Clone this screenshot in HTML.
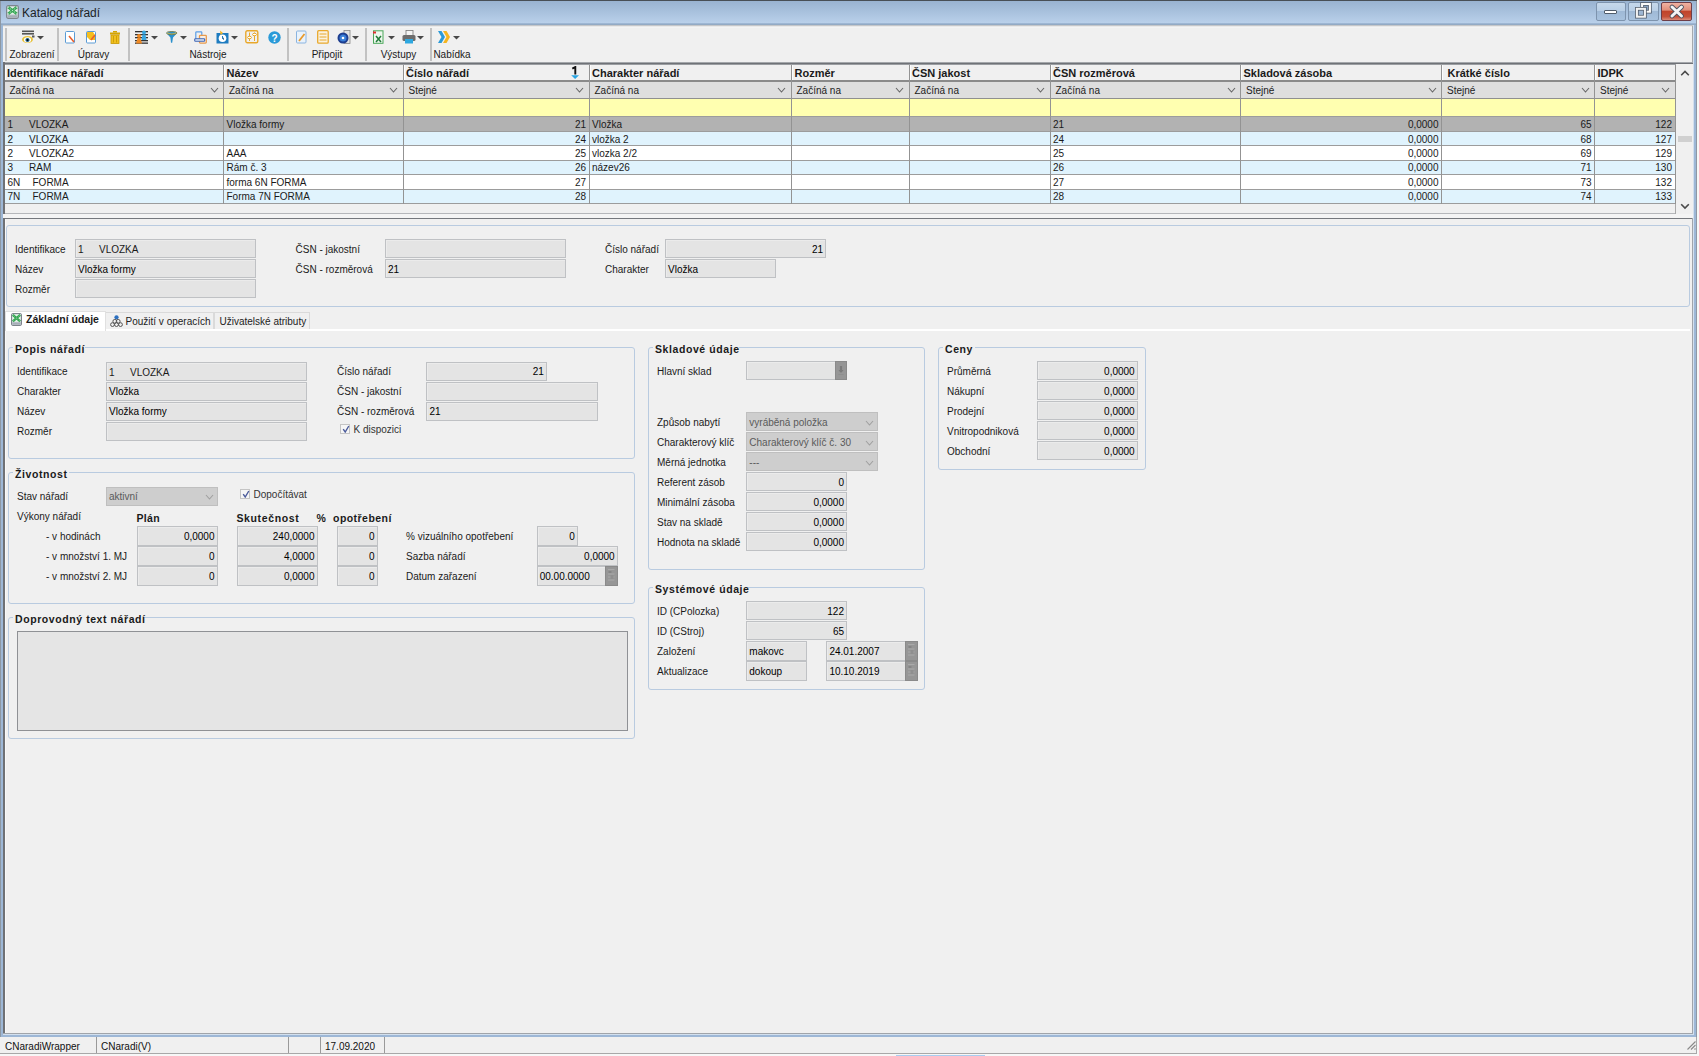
<!DOCTYPE html><html><head><meta charset="utf-8"><title>Katalog nářadí</title><style>
html,body{margin:0;padding:0}
body{width:1699px;height:1056px;overflow:hidden;position:relative;background:#f7f7f7;font-family:"Liberation Sans",sans-serif;color:#000}
div,span,svg{position:absolute;margin:0;padding:0}
span{white-space:nowrap}
</style></head><body>
<div style="left:0px;top:0px;width:1697px;height:1037px;background:#9db7d6"></div>
<div style="left:0px;top:0px;width:1px;height:1037px;background:#8e98a3"></div>
<div style="left:1696px;top:0px;width:1px;height:1037px;background:#8e98a3"></div>
<div style="left:0px;top:0px;width:1697px;height:1px;background:#484f56"></div>
<div style="left:1px;top:1px;width:1695px;height:22px;background:linear-gradient(#99b3d1,#b9d0ea)"></div>
<div style="left:1px;top:22.5px;width:1695px;height:1px;background:#9db6d3"></div>
<div style="left:1px;top:23.5px;width:1695px;height:1.5px;background:#93aac4"></div>
<svg style="left:6px;top:5px" width="13" height="14" viewBox="0 0 13 14"><rect x="0.6" y="0.6" width="11.8" height="12.8" rx="1.6" fill="#c3cad2" stroke="#7d848c" stroke-width="1.1"/><rect x="1.6" y="1.6" width="9.8" height="7.8" fill="#e8f3ea"/><path d="M2.2 2.2 L10.8 8.8 M10.8 2.2 L2.2 8.8" stroke="#3aa857" stroke-width="2.8"/><path d="M2.2 2.2 L10.8 8.8 M10.8 2.2 L2.2 8.8" stroke="#d6f0dc" stroke-width="0.8" stroke-dasharray="1.2 1.3"/><rect x="1.8" y="10.3" width="9.4" height="2.2" fill="#a6aeb7"/></svg>
<span style="left:22px;top:7.24px;font-size:12px;line-height:12px;color:#1b1f26;">Katalog nářadí</span>
<div style="left:1596px;top:2px;width:30px;height:18.5px;box-sizing:border-box;border:1px solid #7d93ad;border-radius:2px;background:linear-gradient(#c6d8ea 0%,#b9cfe6 45%,#9fb9d6 50%,#a8c2de 100%)"></div>
<div style="left:1604px;top:10px;width:13px;height:4px;background:#fff;border:1px solid #505c6a;border-radius:1px;box-sizing:border-box"></div>
<div style="left:1628px;top:2px;width:31px;height:18.5px;box-sizing:border-box;border:1px solid #7d93ad;border-radius:2px;background:linear-gradient(#c6d8ea 0%,#b9cfe6 45%,#9fb9d6 50%,#a8c2de 100%)"></div>
<svg style="left:1634px;top:2px" width="20" height="18"><rect x="8.1" y="2" width="7.8" height="7.7" fill="#8aa3c0" stroke="#4e5866" stroke-width="3.6"/><rect x="8.1" y="2" width="7.8" height="7.7" fill="none" stroke="#fafafa" stroke-width="2.1"/><rect x="2.9" y="6.8" width="8" height="7.9" fill="#9db6d3" stroke="#4e5866" stroke-width="3.6"/><rect x="2.9" y="6.8" width="8" height="7.9" fill="none" stroke="#f2f2f2" stroke-width="2.1"/></svg>
<div style="left:1661px;top:2px;width:31px;height:18.5px;box-sizing:border-box;border:1px solid #6e3e48;border-radius:2px;background:linear-gradient(#f0b2a2 0%,#e08e7a 42%,#c0432a 48%,#c55038 80%,#d98a78 100%)"></div>
<svg style="left:1668px;top:3.5px" width="18" height="15"><path d="M4 3 L13.5 12 M13.5 3 L4 12" stroke="#4a4f5c" stroke-width="4.6" stroke-linecap="round"/><path d="M4 3 L13.5 12 M13.5 3 L4 12" stroke="#f4f4f4" stroke-width="3" stroke-linecap="round"/></svg>
<div style="left:3px;top:25px;width:1690px;height:1009px;background:#f0f0f0"></div>
<div style="left:3px;top:25px;width:1690px;height:1px;background:#c4c6c9"></div>
<div style="left:3px;top:26px;width:1690px;height:1px;background:#e9e9e9"></div>
<div style="left:3px;top:27px;width:1690px;height:1px;background:#f4f4f4"></div>
<div style="left:5px;top:28.2px;width:2px;height:32.4px;background:#c2c2c2"></div>
<div style="left:57px;top:28.2px;width:2px;height:32.4px;background:#c2c2c2"></div>
<div style="left:127.5px;top:28.2px;width:2px;height:32.4px;background:#c2c2c2"></div>
<div style="left:286.5px;top:28.2px;width:2px;height:32.4px;background:#c2c2c2"></div>
<div style="left:365px;top:28.2px;width:2px;height:32.4px;background:#c2c2c2"></div>
<div style="left:429.5px;top:28.2px;width:2px;height:32.4px;background:#c2c2c2"></div>
<span style="left:-168px;width:400px;text-align:center;top:50.03px;font-size:10px;line-height:10px;color:#1a1a1a;">Zobrazení</span>
<span style="left:-106.5px;width:400px;text-align:center;top:50.03px;font-size:10px;line-height:10px;color:#1a1a1a;">Úpravy</span>
<span style="left:8px;width:400px;text-align:center;top:50.03px;font-size:10px;line-height:10px;color:#1a1a1a;">Nástroje</span>
<span style="left:127px;width:400px;text-align:center;top:50.03px;font-size:10px;line-height:10px;color:#1a1a1a;">Připojit</span>
<span style="left:198.5px;width:400px;text-align:center;top:50.03px;font-size:10px;line-height:10px;color:#1a1a1a;">Výstupy</span>
<span style="left:252px;width:400px;text-align:center;top:50.03px;font-size:10px;line-height:10px;color:#1a1a1a;">Nabídka</span>
<svg style="left:22px;top:30px" width="13" height="14"><rect x="0" y="0.5" width="12" height="1.6" fill="#555"/><rect x="0" y="3" width="12" height="1.6" fill="#555"/><ellipse cx="5.5" cy="9.5" rx="5.5" ry="3.5" fill="#e8c23a"/><ellipse cx="5.5" cy="9.8" rx="3.6" ry="2.6" fill="#fff"/><circle cx="5.5" cy="10" r="2.1" fill="#1f5f8a"/><circle cx="5.5" cy="10" r="0.9" fill="#000"/><rect x="10" y="5.5" width="2.5" height="2" fill="#555"/></svg>
<svg style="left:36.7px;top:35.7px" width="7" height="4"><path d="M0 0 L7 0 L3.5 3.6 Z" fill="#484848"/></svg>
<svg style="left:65px;top:31px" width="11" height="13"><rect x="0.5" y="0.5" width="9" height="11.5" rx="1" fill="#fff" stroke="#5a9bd5"/><path d="M4 5 L9 11" stroke="#e8602c" stroke-width="1.6"/></svg>
<svg style="left:86px;top:31px" width="11" height="13"><rect x="0.5" y="0.5" width="9" height="11.5" rx="1" fill="#fff" stroke="#5a9bd5"/><path d="M1 1 H7 L9 4 V9 H4 L1 6 Z" fill="#f5be1d"/><path d="M5 9 L9 4" stroke="#e8602c" stroke-width="1.6"/></svg>
<svg style="left:110px;top:31px" width="10" height="13"><rect x="3" y="0" width="4" height="1.5" fill="#d4a400"/><rect x="0" y="1.5" width="10" height="2" fill="#d4a400"/><rect x="1" y="4" width="8" height="8.5" fill="#f0c020" stroke="#c89600" stroke-width="0.8"/><path d="M3.5 5 V11.5 M6.5 5 V11.5" stroke="#c89600" stroke-width="0.8"/></svg>
<svg style="left:135px;top:30px" width="14" height="14"><g fill="#333"><rect x="0" y="1" width="13" height="1.3"/><rect x="0" y="4" width="13" height="1.3"/><rect x="0" y="7" width="13" height="1.3"/><rect x="0" y="10" width="13" height="1.3"/><rect x="0" y="12.5" width="13" height="1.3"/></g><circle cx="4" cy="6" r="2" fill="#f08a24"/><path d="M1 13.5 L2.5 8 H5.5 L7 13.5Z" fill="#f08a24"/><circle cx="9" cy="2.5" r="2" fill="#38a6e0"/><path d="M6.5 10 L7.5 4.5 H10.5 L11.5 10Z" fill="#38a6e0"/></svg>
<svg style="left:150.7px;top:35.7px" width="7" height="4"><path d="M0 0 L7 0 L3.5 3.6 Z" fill="#484848"/></svg>
<svg style="left:166px;top:31px" width="12" height="12"><path d="M0.3 2 Q5.75 -1 11.2 2 L7 6.5 L6.2 11.8 L5 11.8 L4.4 6.5 Z" fill="#2a90cc"/><ellipse cx="5.75" cy="2" rx="5.3" ry="1.5" fill="none" stroke="#6f7a4a" stroke-width="0.9"/><path d="M1 2.2 Q5.75 3.6 10.5 2.2" stroke="#d4b84a" stroke-width="0.8" fill="none"/></svg>
<svg style="left:180.2px;top:35.7px" width="7" height="4"><path d="M0 0 L7 0 L3.5 3.6 Z" fill="#484848"/></svg>
<svg style="left:194px;top:31px" width="13" height="13"><rect x="1.8" y="0.8" width="6" height="8" rx="0.8" fill="none" stroke="#5b9ee6" stroke-width="1.2"/><rect x="5.5" y="4.3" width="6.8" height="7.8" rx="0.8" fill="#f6efe6" stroke="#e89a4c" stroke-width="1.3"/><rect x="0.7" y="7.8" width="10" height="2.4" rx="0.8" fill="#dfe8f4" stroke="#3e64b4" stroke-width="1.1"/></svg>
<svg style="left:216px;top:30px" width="13" height="14"><rect x="0.5" y="3" width="12" height="10.5" fill="#1e7cc0"/><circle cx="6.5" cy="8.3" r="3.8" fill="#fff"/><path d="M6.5 6 V8.5 L8 9.5" stroke="#1e7cc0" stroke-width="1"/><path d="M4 0.5 L7 3 L4.5 5" fill="#f5b520"/></svg>
<svg style="left:231.2px;top:35.7px" width="7" height="4"><path d="M0 0 L7 0 L3.5 3.6 Z" fill="#484848"/></svg>
<svg style="left:245px;top:30px" width="14" height="14"><rect x="0.8" y="0.8" width="12" height="12" rx="1.5" fill="none" stroke="#e8a82c" stroke-width="1.4"/><path d="M4.5 2.5 V11 M9.5 2.5 V11" stroke="#e8a82c" stroke-width="1"/><ellipse cx="4.5" cy="7.5" rx="2" ry="1.2" fill="#fff" stroke="#e8a82c"/><ellipse cx="9.5" cy="4.5" rx="2" ry="1.2" fill="#fff" stroke="#e8a82c"/></svg>
<svg style="left:267.5px;top:31px" width="13" height="13"><circle cx="6.5" cy="6.5" r="6.2" fill="#2a9ad8"/><text x="6.5" y="10.5" text-anchor="middle" font-family="Liberation Sans" font-weight="bold" font-size="10" fill="#fff">?</text></svg>
<svg style="left:296px;top:30px" width="11" height="14"><rect x="0.5" y="1" width="9.5" height="12" rx="1" fill="#e9f2fb" stroke="#8ab4e0"/><path d="M3 11 L8.5 4" stroke="#e89a2c" stroke-width="1.8"/></svg>
<svg style="left:317px;top:30px" width="12" height="14"><rect x="0.7" y="0.7" width="10.5" height="12.5" rx="1" fill="#fbf2df" stroke="#e8a82c" stroke-width="1.3"/><path d="M2.5 4 H9.5 M2.5 7 H9.5 M2.5 10 H9.5" stroke="#e8a82c" stroke-width="1"/></svg>
<svg style="left:337px;top:30px" width="14" height="14"><rect x="7" y="0.5" width="6" height="13" fill="#e3e3e3" stroke="#888" stroke-width="0.8"/><circle cx="6" cy="8" r="5.5" fill="#1d3d8f"/><circle cx="6" cy="8" r="3.5" fill="#3a7fd8"/><circle cx="6" cy="8" r="1.3" fill="#fff"/></svg>
<svg style="left:351.7px;top:35.7px" width="7" height="4"><path d="M0 0 L7 0 L3.5 3.6 Z" fill="#484848"/></svg>
<svg style="left:373px;top:30px" width="11" height="14"><rect x="0.5" y="0.8" width="9.5" height="12.5" fill="#eef7ee" stroke="#4aa85a"/><path d="M3 6 L8 12 M8 6 L3 12" stroke="#1f7a38" stroke-width="1.5"/><rect x="0" y="1.5" width="3" height="2" fill="#e03030"/></svg>
<svg style="left:387.7px;top:35.7px" width="7" height="4"><path d="M0 0 L7 0 L3.5 3.6 Z" fill="#484848"/></svg>
<svg style="left:402px;top:30px" width="14" height="14"><rect x="4" y="0.5" width="7" height="5" fill="#f4f4f4" stroke="#777" stroke-width="0.8"/><rect x="0.5" y="5" width="13" height="6" rx="1.5" fill="#6d6d6d"/><rect x="3" y="9" width="8" height="4.5" fill="#2ea8e0"/></svg>
<svg style="left:417.2px;top:35.7px" width="7" height="4"><path d="M0 0 L7 0 L3.5 3.6 Z" fill="#484848"/></svg>
<svg style="left:438px;top:31px" width="13" height="12"><path d="M0 0 H3.5 L7 6 L3.5 12 H0 L3.5 6Z" fill="#2a9ad8"/><path d="M5 0 H8.5 L12 6 L8.5 12 H5 L8.5 6Z" fill="#f5b520"/></svg>
<svg style="left:453.2px;top:35.7px" width="7" height="4"><path d="M0 0 L7 0 L3.5 3.6 Z" fill="#484848"/></svg>
<div style="left:4px;top:63px;width:1689px;height:151px;background:#f0f0f0"></div>
<div style="left:3px;top:62px;width:1690px;height:1px;background:#a4a7ab"></div>
<div style="left:3px;top:63px;width:1690px;height:1px;background:#6f7277"></div>
<div style="left:3px;top:64px;width:1690px;height:1px;background:#9a9da1"></div>
<div style="left:4px;top:65px;width:1671px;height:15.5px;background:#f0f0f0"></div>
<div style="left:4px;top:81.5px;width:1671px;height:16px;background:#dedede"></div>
<div style="left:4px;top:99px;width:1671px;height:17.2px;background:#ffffb0"></div>
<div style="left:4px;top:117.2px;width:1671px;height:14.499999999999986px;background:#b2b2b2"></div>
<div style="left:4px;top:131.7px;width:1671px;height:14.5px;background:#e0f3fd"></div>
<div style="left:4px;top:146.2px;width:1671px;height:14.400000000000006px;background:#ffffff"></div>
<div style="left:4px;top:160.6px;width:1671px;height:14.5px;background:#e0f3fd"></div>
<div style="left:4px;top:175.1px;width:1671px;height:14.5px;background:#ffffff"></div>
<div style="left:4px;top:189.6px;width:1671px;height:14.400000000000006px;background:#e0f3fd"></div>
<div style="left:4px;top:80px;width:1671px;height:1.5px;background:#8a8a8a"></div>
<div style="left:4px;top:97.5px;width:1671px;height:1.5px;background:#8f8f8f"></div>
<div style="left:4px;top:116px;width:1671px;height:1px;background:#9c9c9c"></div>
<div style="left:4px;top:131px;width:1671px;height:1px;background:#9c9c9c"></div>
<div style="left:4px;top:145px;width:1671px;height:1px;background:#9c9c9c"></div>
<div style="left:4px;top:160px;width:1671px;height:1px;background:#9c9c9c"></div>
<div style="left:4px;top:174px;width:1671px;height:1px;background:#9c9c9c"></div>
<div style="left:4px;top:189px;width:1671px;height:1px;background:#9c9c9c"></div>
<div style="left:4px;top:203px;width:1671px;height:1px;background:#9c9c9c"></div>
<div style="left:4px;top:213px;width:1671px;height:1px;background:#b5b7ba"></div>
<div style="left:223px;top:65px;width:1px;height:138.5px;background:#939393"></div>
<div style="left:403px;top:65px;width:1px;height:138.5px;background:#939393"></div>
<div style="left:589px;top:65px;width:1px;height:138.5px;background:#939393"></div>
<div style="left:791px;top:65px;width:1px;height:138.5px;background:#939393"></div>
<div style="left:909px;top:65px;width:1px;height:138.5px;background:#939393"></div>
<div style="left:1050px;top:65px;width:1px;height:138.5px;background:#939393"></div>
<div style="left:1240px;top:65px;width:1px;height:138.5px;background:#939393"></div>
<div style="left:1441px;top:65px;width:1px;height:138.5px;background:#939393"></div>
<div style="left:1594px;top:65px;width:1px;height:138.5px;background:#939393"></div>
<div style="left:1675px;top:65px;width:1px;height:138.5px;background:#939393"></div>
<div style="left:1674.5px;top:203.5px;width:1px;height:10px;background:#a9a9a9"></div>
<div style="left:4.7px;top:65px;width:1px;height:15px;background:#fdfdfd"></div>
<div style="left:224.2px;top:65px;width:1px;height:15px;background:#fdfdfd"></div>
<div style="left:403.7px;top:65px;width:1px;height:15px;background:#fdfdfd"></div>
<div style="left:589.7px;top:65px;width:1px;height:15px;background:#fdfdfd"></div>
<div style="left:791.7px;top:65px;width:1px;height:15px;background:#fdfdfd"></div>
<div style="left:909.7px;top:65px;width:1px;height:15px;background:#fdfdfd"></div>
<div style="left:1050.7px;top:65px;width:1px;height:15px;background:#fdfdfd"></div>
<div style="left:1241.2px;top:65px;width:1px;height:15px;background:#fdfdfd"></div>
<div style="left:1442.2px;top:65px;width:1px;height:15px;background:#fdfdfd"></div>
<div style="left:1595.2px;top:65px;width:1px;height:15px;background:#fdfdfd"></div>
<span style="left:7px;top:68.29px;font-size:11px;line-height:11px;font-weight:bold;color:#1a1a1a;">Identifikace nářadí</span>
<span style="left:9.5px;top:86.03px;font-size:10px;line-height:10px;color:#222;">Začíná na</span>
<svg style="left:209.5px;top:87px" width="9" height="6"><path d="M1 1 L4.5 5 L8 1" fill="none" stroke="#666" stroke-width="1.1"/></svg>
<span style="left:226.5px;top:68.29px;font-size:11px;line-height:11px;font-weight:bold;color:#1a1a1a;">Název</span>
<span style="left:229.0px;top:86.03px;font-size:10px;line-height:10px;color:#222;">Začíná na</span>
<svg style="left:389px;top:87px" width="9" height="6"><path d="M1 1 L4.5 5 L8 1" fill="none" stroke="#666" stroke-width="1.1"/></svg>
<span style="left:406px;top:68.29px;font-size:11px;line-height:11px;font-weight:bold;color:#1a1a1a;">Číslo nářadí</span>
<span style="left:408.5px;top:86.03px;font-size:10px;line-height:10px;color:#222;">Stejné</span>
<svg style="left:575px;top:87px" width="9" height="6"><path d="M1 1 L4.5 5 L8 1" fill="none" stroke="#666" stroke-width="1.1"/></svg>
<span style="left:592px;top:68.29px;font-size:11px;line-height:11px;font-weight:bold;color:#1a1a1a;">Charakter nářadí</span>
<span style="left:594.5px;top:86.03px;font-size:10px;line-height:10px;color:#222;">Začíná na</span>
<svg style="left:777px;top:87px" width="9" height="6"><path d="M1 1 L4.5 5 L8 1" fill="none" stroke="#666" stroke-width="1.1"/></svg>
<span style="left:794.5px;top:68.29px;font-size:11px;line-height:11px;font-weight:bold;color:#1a1a1a;">Rozměr</span>
<span style="left:796.5px;top:86.03px;font-size:10px;line-height:10px;color:#222;">Začíná na</span>
<svg style="left:895px;top:87px" width="9" height="6"><path d="M1 1 L4.5 5 L8 1" fill="none" stroke="#666" stroke-width="1.1"/></svg>
<span style="left:912px;top:68.29px;font-size:11px;line-height:11px;font-weight:bold;color:#1a1a1a;">ČSN jakost</span>
<span style="left:914.5px;top:86.03px;font-size:10px;line-height:10px;color:#222;">Začíná na</span>
<svg style="left:1036px;top:87px" width="9" height="6"><path d="M1 1 L4.5 5 L8 1" fill="none" stroke="#666" stroke-width="1.1"/></svg>
<span style="left:1053px;top:68.29px;font-size:11px;line-height:11px;font-weight:bold;color:#1a1a1a;">ČSN rozměrová</span>
<span style="left:1055.5px;top:86.03px;font-size:10px;line-height:10px;color:#222;">Začíná na</span>
<svg style="left:1226.5px;top:87px" width="9" height="6"><path d="M1 1 L4.5 5 L8 1" fill="none" stroke="#666" stroke-width="1.1"/></svg>
<span style="left:1243.5px;top:68.29px;font-size:11px;line-height:11px;font-weight:bold;color:#1a1a1a;">Skladová zásoba</span>
<span style="left:1246.0px;top:86.03px;font-size:10px;line-height:10px;color:#222;">Stejné</span>
<svg style="left:1427.5px;top:87px" width="9" height="6"><path d="M1 1 L4.5 5 L8 1" fill="none" stroke="#666" stroke-width="1.1"/></svg>
<span style="left:1447.5px;top:68.29px;font-size:11px;line-height:11px;font-weight:bold;color:#1a1a1a;">Krátké číslo</span>
<span style="left:1447.0px;top:86.03px;font-size:10px;line-height:10px;color:#222;">Stejné</span>
<svg style="left:1580.5px;top:87px" width="9" height="6"><path d="M1 1 L4.5 5 L8 1" fill="none" stroke="#666" stroke-width="1.1"/></svg>
<span style="left:1597.5px;top:68.29px;font-size:11px;line-height:11px;font-weight:bold;color:#1a1a1a;">IDPK</span>
<span style="left:1600.0px;top:86.03px;font-size:10px;line-height:10px;color:#222;">Stejné</span>
<svg style="left:1661px;top:87px" width="9" height="6"><path d="M1 1 L4.5 5 L8 1" fill="none" stroke="#666" stroke-width="1.1"/></svg>
<svg style="left:570px;top:66px" width="10" height="14"><path d="M2.3 2.6 L5.3 1 V8.6" fill="none" stroke="#111" stroke-width="1.9"/><path d="M1.2 9.2 H9 L5.1 13 Z" fill="#2aa6e4"/></svg>
<span style="left:7.5px;top:120.08px;font-size:10px;line-height:10px;color:#1a1a1a;">1</span>
<span style="left:29px;top:120.08px;font-size:10px;line-height:10px;color:#1a1a1a;">VLOZKA</span>
<span style="left:226.5px;top:120.08px;font-size:10px;line-height:10px;color:#1a1a1a;">Vložka formy</span>
<span style="left:186px;width:400px;text-align:right;top:120.08px;font-size:10px;line-height:10px;color:#1a1a1a;">21</span>
<span style="left:592px;top:120.08px;font-size:10px;line-height:10px;color:#1a1a1a;">Vložka</span>
<span style="left:1053px;top:120.08px;font-size:10px;line-height:10px;color:#1a1a1a;">21</span>
<span style="left:1038.5px;width:400px;text-align:right;top:120.08px;font-size:10px;line-height:10px;color:#1a1a1a;">0,0000</span>
<span style="left:1191.5px;width:400px;text-align:right;top:120.08px;font-size:10px;line-height:10px;color:#1a1a1a;">65</span>
<span style="left:1272px;width:400px;text-align:right;top:120.08px;font-size:10px;line-height:10px;color:#1a1a1a;">122</span>
<span style="left:7.5px;top:134.58px;font-size:10px;line-height:10px;color:#1a1a1a;">2</span>
<span style="left:29px;top:134.58px;font-size:10px;line-height:10px;color:#1a1a1a;">VLOZKA</span>
<span style="left:186px;width:400px;text-align:right;top:134.58px;font-size:10px;line-height:10px;color:#1a1a1a;">24</span>
<span style="left:592px;top:134.58px;font-size:10px;line-height:10px;color:#1a1a1a;">vložka 2</span>
<span style="left:1053px;top:134.58px;font-size:10px;line-height:10px;color:#1a1a1a;">24</span>
<span style="left:1038.5px;width:400px;text-align:right;top:134.58px;font-size:10px;line-height:10px;color:#1a1a1a;">0,0000</span>
<span style="left:1191.5px;width:400px;text-align:right;top:134.58px;font-size:10px;line-height:10px;color:#1a1a1a;">68</span>
<span style="left:1272px;width:400px;text-align:right;top:134.58px;font-size:10px;line-height:10px;color:#1a1a1a;">127</span>
<span style="left:7.5px;top:149.03px;font-size:10px;line-height:10px;color:#1a1a1a;">2</span>
<span style="left:29px;top:149.03px;font-size:10px;line-height:10px;color:#1a1a1a;">VLOZKA2</span>
<span style="left:226.5px;top:149.03px;font-size:10px;line-height:10px;color:#1a1a1a;">AAA</span>
<span style="left:186px;width:400px;text-align:right;top:149.03px;font-size:10px;line-height:10px;color:#1a1a1a;">25</span>
<span style="left:592px;top:149.03px;font-size:10px;line-height:10px;color:#1a1a1a;">vlozka 2/2</span>
<span style="left:1053px;top:149.03px;font-size:10px;line-height:10px;color:#1a1a1a;">25</span>
<span style="left:1038.5px;width:400px;text-align:right;top:149.03px;font-size:10px;line-height:10px;color:#1a1a1a;">0,0000</span>
<span style="left:1191.5px;width:400px;text-align:right;top:149.03px;font-size:10px;line-height:10px;color:#1a1a1a;">69</span>
<span style="left:1272px;width:400px;text-align:right;top:149.03px;font-size:10px;line-height:10px;color:#1a1a1a;">129</span>
<span style="left:7.5px;top:163.48px;font-size:10px;line-height:10px;color:#1a1a1a;">3</span>
<span style="left:29px;top:163.48px;font-size:10px;line-height:10px;color:#1a1a1a;">RAM</span>
<span style="left:226.5px;top:163.48px;font-size:10px;line-height:10px;color:#1a1a1a;">Rám č. 3</span>
<span style="left:186px;width:400px;text-align:right;top:163.48px;font-size:10px;line-height:10px;color:#1a1a1a;">26</span>
<span style="left:592px;top:163.48px;font-size:10px;line-height:10px;color:#1a1a1a;">název26</span>
<span style="left:1053px;top:163.48px;font-size:10px;line-height:10px;color:#1a1a1a;">26</span>
<span style="left:1038.5px;width:400px;text-align:right;top:163.48px;font-size:10px;line-height:10px;color:#1a1a1a;">0,0000</span>
<span style="left:1191.5px;width:400px;text-align:right;top:163.48px;font-size:10px;line-height:10px;color:#1a1a1a;">71</span>
<span style="left:1272px;width:400px;text-align:right;top:163.48px;font-size:10px;line-height:10px;color:#1a1a1a;">130</span>
<span style="left:7.5px;top:177.98px;font-size:10px;line-height:10px;color:#1a1a1a;">6N</span>
<span style="left:32.5px;top:177.98px;font-size:10px;line-height:10px;color:#1a1a1a;">FORMA</span>
<span style="left:226.5px;top:177.98px;font-size:10px;line-height:10px;color:#1a1a1a;">forma 6N FORMA</span>
<span style="left:186px;width:400px;text-align:right;top:177.98px;font-size:10px;line-height:10px;color:#1a1a1a;">27</span>
<span style="left:1053px;top:177.98px;font-size:10px;line-height:10px;color:#1a1a1a;">27</span>
<span style="left:1038.5px;width:400px;text-align:right;top:177.98px;font-size:10px;line-height:10px;color:#1a1a1a;">0,0000</span>
<span style="left:1191.5px;width:400px;text-align:right;top:177.98px;font-size:10px;line-height:10px;color:#1a1a1a;">73</span>
<span style="left:1272px;width:400px;text-align:right;top:177.98px;font-size:10px;line-height:10px;color:#1a1a1a;">132</span>
<span style="left:7.5px;top:192.44px;font-size:10px;line-height:10px;color:#1a1a1a;">7N</span>
<span style="left:32.5px;top:192.44px;font-size:10px;line-height:10px;color:#1a1a1a;">FORMA</span>
<span style="left:226.5px;top:192.44px;font-size:10px;line-height:10px;color:#1a1a1a;">Forma 7N FORMA</span>
<span style="left:186px;width:400px;text-align:right;top:192.44px;font-size:10px;line-height:10px;color:#1a1a1a;">28</span>
<span style="left:1053px;top:192.44px;font-size:10px;line-height:10px;color:#1a1a1a;">28</span>
<span style="left:1038.5px;width:400px;text-align:right;top:192.44px;font-size:10px;line-height:10px;color:#1a1a1a;">0,0000</span>
<span style="left:1191.5px;width:400px;text-align:right;top:192.44px;font-size:10px;line-height:10px;color:#1a1a1a;">74</span>
<span style="left:1272px;width:400px;text-align:right;top:192.44px;font-size:10px;line-height:10px;color:#1a1a1a;">133</span>
<div style="left:1675.5px;top:64px;width:17.5px;height:150px;background:#f0f0f0"></div>
<svg style="left:1680px;top:203px" width="10" height="7"><path d="M1.2 1.2 L5 5 L8.8 1.2" fill="none" stroke="#4a4a4a" stroke-width="1.6"/></svg>
<svg style="left:1680px;top:70px" width="10" height="7"><path d="M1.2 5.3 L5 1.5 L8.8 5.3" fill="none" stroke="#4a4a4a" stroke-width="1.6"/></svg>
<div style="left:1677.5px;top:136px;width:14.5px;height:6px;background:#d0d0d0"></div>
<div style="left:3px;top:214px;width:1690px;height:4px;background:#f4f4f4"></div>
<div style="left:3px;top:218px;width:1690px;height:1px;background:#75787d"></div>
<div style="left:3px;top:62px;width:1.6px;height:152px;background:#6f7175"></div>
<div style="left:3px;top:218px;width:1.6px;height:816px;background:#6f7175"></div>
<div style="left:1692px;top:218px;width:1px;height:816px;background:#a0a4aa"></div>
<div style="left:1692px;top:26px;width:1px;height:36px;background:#a6a9ad"></div>
<div style="left:1693px;top:25px;width:1px;height:1009px;background:#d3e0ee"></div>
<div style="left:5px;top:219px;width:1.2px;height:814px;background:#f9f9f9"></div>
<div style="left:3px;top:1033px;width:1690px;height:1px;background:#a0a4aa"></div>
<div style="left:3px;top:1034px;width:1691px;height:0.8px;background:#d3e0ee"></div>
<div style="left:6px;top:225px;width:1684px;height:82px;box-sizing:border-box;border:1px solid #b9cbe0;border-radius:3px"></div>
<span style="left:15px;top:245.03px;font-size:10px;line-height:10px;color:#1a1a1a;">Identifikace</span>
<span style="left:15px;top:265.04px;font-size:10px;line-height:10px;color:#1a1a1a;">Název</span>
<span style="left:15px;top:285.04px;font-size:10px;line-height:10px;color:#1a1a1a;">Rozměr</span>
<div style="left:75px;top:239px;width:181px;height:19px;box-sizing:border-box;border:1px solid #bfc1c4;background:#e4e4e4;box-shadow:inset 1px 1px 0 #ebebeb"></div>
<span style="left:78px;top:244.84px;font-size:10px;line-height:10px;color:#1a1a1a;">1</span>
<span style="left:99px;top:244.84px;font-size:10px;line-height:10px;color:#1a1a1a;">VLOZKA</span>
<div style="left:75px;top:259px;width:181px;height:19px;box-sizing:border-box;border:1px solid #bfc1c4;background:#e4e4e4;box-shadow:inset 1px 1px 0 #ebebeb"></div>
<span style="left:78px;top:264.64px;font-size:10px;line-height:10px;color:#000;">Vložka formy</span>
<div style="left:75px;top:279px;width:181px;height:19px;box-sizing:border-box;border:1px solid #bfc1c4;background:#e4e4e4;box-shadow:inset 1px 1px 0 #ebebeb"></div>
<span style="left:295.5px;top:245.03px;font-size:10px;line-height:10px;color:#1a1a1a;">ČSN - jakostní</span>
<span style="left:295.5px;top:265.04px;font-size:10px;line-height:10px;color:#1a1a1a;">ČSN - rozměrová</span>
<div style="left:385px;top:239px;width:181px;height:19px;box-sizing:border-box;border:1px solid #bfc1c4;background:#e4e4e4;box-shadow:inset 1px 1px 0 #ebebeb"></div>
<div style="left:385px;top:259px;width:181px;height:19px;box-sizing:border-box;border:1px solid #bfc1c4;background:#e4e4e4;box-shadow:inset 1px 1px 0 #ebebeb"></div>
<span style="left:388px;top:264.64px;font-size:10px;line-height:10px;color:#000;">21</span>
<span style="left:605px;top:245.03px;font-size:10px;line-height:10px;color:#1a1a1a;">Číslo nářadí</span>
<span style="left:605px;top:265.04px;font-size:10px;line-height:10px;color:#1a1a1a;">Charakter</span>
<div style="left:665px;top:239px;width:161px;height:19px;box-sizing:border-box;border:1px solid #bfc1c4;background:#e4e4e4;box-shadow:inset 1px 1px 0 #ebebeb"></div>
<span style="left:423px;width:400px;text-align:right;top:244.63px;font-size:10px;line-height:10px;color:#000;">21</span>
<div style="left:665px;top:259px;width:111px;height:19px;box-sizing:border-box;border:1px solid #bfc1c4;background:#e4e4e4;box-shadow:inset 1px 1px 0 #ebebeb"></div>
<span style="left:668px;top:264.64px;font-size:10px;line-height:10px;color:#000;">Vložka</span>
<div style="left:5px;top:328.7px;width:1685px;height:2px;background:#ffffff"></div>
<div style="left:105.3px;top:312.4px;width:108.5px;height:16.5px;box-sizing:border-box;border:1px solid #dadada;border-bottom:none;background:#f0f0f0"></div>
<div style="left:213.5px;top:312.4px;width:96.5px;height:16.5px;box-sizing:border-box;border:1px solid #dadada;border-bottom:none;background:#f0f0f0"></div>
<div style="left:5px;top:311px;width:100.5px;height:19.5px;box-sizing:border-box;border:1px solid #e0e0e0;border-bottom:none;background:#ffffff"></div>
<svg style="left:11px;top:313px" width="11" height="13" viewBox="0 0 11 13"><rect x="0.5" y="0.5" width="10" height="12" rx="1.3" fill="#c3cad2" stroke="#7d848c" stroke-width="1"/><rect x="1.4" y="1.4" width="8.2" height="7.4" fill="#e8f3ea"/><path d="M1.8 1.8 L9.2 8.4 M9.2 1.8 L1.8 8.4" stroke="#2da34c" stroke-width="2.3"/><path d="M1.8 1.8 L9.2 8.4 M9.2 1.8 L1.8 8.4" stroke="#b9e3c2" stroke-width="0.6" stroke-dasharray="1 1.1"/><rect x="1.5" y="9.6" width="8" height="2" fill="#a6aeb7"/></svg>
<span style="left:26px;top:314.11px;font-size:10.5px;line-height:10.5px;font-weight:bold;color:#1a1a1a;">Základní údaje</span>
<svg style="left:109.5px;top:314.5px" width="13" height="12"><circle cx="6.5" cy="2.3" r="2.1" fill="#2a6fc0"/><g fill="none" stroke="#555" stroke-width="1"><circle cx="4.8" cy="6.3" r="1.9"/><circle cx="8.2" cy="6.3" r="1.9"/><circle cx="2.5" cy="9.6" r="1.9"/><circle cx="6.5" cy="9.6" r="1.9"/><circle cx="10.5" cy="9.6" r="1.9"/></g></svg>
<span style="left:125.5px;top:317.14px;font-size:10px;line-height:10px;color:#222;">Použití v operacích</span>
<span style="left:219.5px;top:317.14px;font-size:10px;line-height:10px;color:#222;">Uživatelské atributy</span>
<div style="left:8px;top:347px;width:627px;height:111.5px;box-sizing:border-box;border:1px solid #b9cbe0;border-radius:3px"></div>
<div style="left:13px;top:341px;width:72px;height:12px;background:#f0f0f0"></div>
<span style="left:15px;top:343.51px;font-size:10.5px;line-height:10.5px;font-weight:bold;color:#1a1a1a;letter-spacing:0.58px;">Popis nářadí</span>
<span style="left:17px;top:367.04px;font-size:10px;line-height:10px;color:#1a1a1a;">Identifikace</span>
<span style="left:17px;top:387.04px;font-size:10px;line-height:10px;color:#1a1a1a;">Charakter</span>
<span style="left:17px;top:407.04px;font-size:10px;line-height:10px;color:#1a1a1a;">Název</span>
<span style="left:17px;top:427.04px;font-size:10px;line-height:10px;color:#1a1a1a;">Rozměr</span>
<div style="left:106px;top:361.8px;width:201px;height:19px;box-sizing:border-box;border:1px solid #bfc1c4;background:#e4e4e4;box-shadow:inset 1px 1px 0 #ebebeb"></div>
<span style="left:109px;top:367.74px;font-size:10px;line-height:10px;color:#1a1a1a;">1</span>
<span style="left:130px;top:367.74px;font-size:10px;line-height:10px;color:#1a1a1a;">VLOZKA</span>
<div style="left:106px;top:381.8px;width:201px;height:19px;box-sizing:border-box;border:1px solid #bfc1c4;background:#e4e4e4;box-shadow:inset 1px 1px 0 #ebebeb"></div>
<span style="left:109px;top:387.44px;font-size:10px;line-height:10px;color:#000;">Vložka</span>
<div style="left:106px;top:401.8px;width:201px;height:19px;box-sizing:border-box;border:1px solid #bfc1c4;background:#e4e4e4;box-shadow:inset 1px 1px 0 #ebebeb"></div>
<span style="left:109px;top:407.44px;font-size:10px;line-height:10px;color:#000;">Vložka formy</span>
<div style="left:106px;top:421.8px;width:201px;height:19px;box-sizing:border-box;border:1px solid #bfc1c4;background:#e4e4e4;box-shadow:inset 1px 1px 0 #ebebeb"></div>
<span style="left:337px;top:367.04px;font-size:10px;line-height:10px;color:#1a1a1a;">Číslo nářadí</span>
<span style="left:337px;top:387.04px;font-size:10px;line-height:10px;color:#1a1a1a;">ČSN - jakostní</span>
<span style="left:337px;top:407.04px;font-size:10px;line-height:10px;color:#1a1a1a;">ČSN - rozměrová</span>
<div style="left:426.4px;top:361.8px;width:120.5px;height:19px;box-sizing:border-box;border:1px solid #bfc1c4;background:#e4e4e4;box-shadow:inset 1px 1px 0 #ebebeb"></div>
<span style="left:143.89999999999998px;width:400px;text-align:right;top:367.44px;font-size:10px;line-height:10px;color:#000;">21</span>
<div style="left:426.4px;top:381.8px;width:171.3px;height:19px;box-sizing:border-box;border:1px solid #bfc1c4;background:#e4e4e4;box-shadow:inset 1px 1px 0 #ebebeb"></div>
<div style="left:426.4px;top:401.8px;width:171.3px;height:19px;box-sizing:border-box;border:1px solid #bfc1c4;background:#e4e4e4;box-shadow:inset 1px 1px 0 #ebebeb"></div>
<span style="left:429.4px;top:407.44px;font-size:10px;line-height:10px;color:#000;">21</span>
<div style="left:340px;top:424px;width:10px;height:10px;box-sizing:border-box;border:1px solid #c4c4c4;background:#f6f6f6"></div>
<svg style="left:341.5px;top:425px" width="8" height="8"><path d="M1.2 4.2 L3.2 7 L6.8 1" fill="none" stroke="#4b5b9b" stroke-width="1.4"/></svg>
<span style="left:353.5px;top:425.04px;font-size:10px;line-height:10px;color:#333;">K dispozici</span>
<div style="left:8px;top:472px;width:627px;height:132px;box-sizing:border-box;border:1px solid #b9cbe0;border-radius:3px"></div>
<div style="left:13px;top:466px;width:56px;height:12px;background:#f0f0f0"></div>
<span style="left:15px;top:468.51px;font-size:10.5px;line-height:10.5px;font-weight:bold;color:#1a1a1a;letter-spacing:0.58px;">Životnost</span>
<span style="left:17px;top:492.04px;font-size:10px;line-height:10px;color:#1a1a1a;">Stav nářadí</span>
<div style="left:106px;top:486.5px;width:111.5px;height:19px;box-sizing:border-box;border:1px solid #bfbfbf;background:#cecece"></div>
<span style="left:109px;top:492.14px;font-size:10px;line-height:10px;color:#5a5a5a;">aktivní</span>
<svg style="left:204.5px;top:494.0px" width="9" height="6"><path d="M1 1 L4.5 5 L8 1" fill="none" stroke="#a0a0a0" stroke-width="1.1"/></svg>
<div style="left:240px;top:489px;width:10px;height:10px;box-sizing:border-box;border:1px solid #c4c4c4;background:#f6f6f6"></div>
<svg style="left:241.5px;top:490px" width="8" height="8"><path d="M1.2 4.2 L3.2 7 L6.8 1" fill="none" stroke="#4b5b9b" stroke-width="1.4"/></svg>
<span style="left:253.5px;top:490.04px;font-size:10px;line-height:10px;color:#333;">Dopočítávat</span>
<span style="left:17px;top:512.04px;font-size:10px;line-height:10px;color:#1a1a1a;">Výkony nářadí</span>
<span style="left:136.5px;top:512.61px;font-size:10.5px;line-height:10.5px;font-weight:bold;color:#1a1a1a;letter-spacing:0.3px;">Plán</span>
<span style="left:236.5px;top:512.61px;font-size:10.5px;line-height:10.5px;font-weight:bold;color:#1a1a1a;letter-spacing:0.62px;">Skutečnost</span>
<span style="left:316.5px;top:512.61px;font-size:10.5px;line-height:10.5px;font-weight:bold;color:#1a1a1a;letter-spacing:0.45px;">%&nbsp;&nbsp;opotřebení</span>
<span style="left:46px;top:531.74px;font-size:10px;line-height:10px;color:#1a1a1a;">- v hodinách</span>
<div style="left:137px;top:526px;width:80.5px;height:19.5px;box-sizing:border-box;border:1px solid #bfc1c4;background:#e4e4e4;box-shadow:inset 1px 1px 0 #ebebeb"></div>
<span style="left:-185.5px;width:400px;text-align:right;top:531.88px;font-size:10px;line-height:10px;color:#000;">0,0000</span>
<div style="left:237px;top:526px;width:80.5px;height:19.5px;box-sizing:border-box;border:1px solid #bfc1c4;background:#e4e4e4;box-shadow:inset 1px 1px 0 #ebebeb"></div>
<span style="left:-85.5px;width:400px;text-align:right;top:531.88px;font-size:10px;line-height:10px;color:#000;">240,0000</span>
<div style="left:337px;top:526px;width:40.5px;height:19.5px;box-sizing:border-box;border:1px solid #bfc1c4;background:#e4e4e4;box-shadow:inset 1px 1px 0 #ebebeb"></div>
<span style="left:-25.5px;width:400px;text-align:right;top:531.88px;font-size:10px;line-height:10px;color:#000;">0</span>
<span style="left:46px;top:551.74px;font-size:10px;line-height:10px;color:#1a1a1a;">- v množství 1. MJ</span>
<div style="left:137px;top:546px;width:80.5px;height:19.5px;box-sizing:border-box;border:1px solid #bfc1c4;background:#e4e4e4;box-shadow:inset 1px 1px 0 #ebebeb"></div>
<span style="left:-185.5px;width:400px;text-align:right;top:551.88px;font-size:10px;line-height:10px;color:#000;">0</span>
<div style="left:237px;top:546px;width:80.5px;height:19.5px;box-sizing:border-box;border:1px solid #bfc1c4;background:#e4e4e4;box-shadow:inset 1px 1px 0 #ebebeb"></div>
<span style="left:-85.5px;width:400px;text-align:right;top:551.88px;font-size:10px;line-height:10px;color:#000;">4,0000</span>
<div style="left:337px;top:546px;width:40.5px;height:19.5px;box-sizing:border-box;border:1px solid #bfc1c4;background:#e4e4e4;box-shadow:inset 1px 1px 0 #ebebeb"></div>
<span style="left:-25.5px;width:400px;text-align:right;top:551.88px;font-size:10px;line-height:10px;color:#000;">0</span>
<span style="left:46px;top:571.74px;font-size:10px;line-height:10px;color:#1a1a1a;">- v množství 2. MJ</span>
<div style="left:137px;top:566px;width:80.5px;height:19.5px;box-sizing:border-box;border:1px solid #bfc1c4;background:#e4e4e4;box-shadow:inset 1px 1px 0 #ebebeb"></div>
<span style="left:-185.5px;width:400px;text-align:right;top:571.88px;font-size:10px;line-height:10px;color:#000;">0</span>
<div style="left:237px;top:566px;width:80.5px;height:19.5px;box-sizing:border-box;border:1px solid #bfc1c4;background:#e4e4e4;box-shadow:inset 1px 1px 0 #ebebeb"></div>
<span style="left:-85.5px;width:400px;text-align:right;top:571.88px;font-size:10px;line-height:10px;color:#000;">0,0000</span>
<div style="left:337px;top:566px;width:40.5px;height:19.5px;box-sizing:border-box;border:1px solid #bfc1c4;background:#e4e4e4;box-shadow:inset 1px 1px 0 #ebebeb"></div>
<span style="left:-25.5px;width:400px;text-align:right;top:571.88px;font-size:10px;line-height:10px;color:#000;">0</span>
<span style="left:406px;top:531.74px;font-size:10px;line-height:10px;color:#1a1a1a;">% vizuálního opotřebení</span>
<div style="left:536.7px;top:526px;width:41px;height:19.5px;box-sizing:border-box;border:1px solid #bfc1c4;background:#e4e4e4;box-shadow:inset 1px 1px 0 #ebebeb"></div>
<span style="left:174.70000000000005px;width:400px;text-align:right;top:531.88px;font-size:10px;line-height:10px;color:#000;">0</span>
<span style="left:406px;top:551.74px;font-size:10px;line-height:10px;color:#1a1a1a;">Sazba nářadí</span>
<div style="left:536.7px;top:546px;width:81px;height:19.5px;box-sizing:border-box;border:1px solid #bfc1c4;background:#e4e4e4;box-shadow:inset 1px 1px 0 #ebebeb"></div>
<span style="left:214.70000000000005px;width:400px;text-align:right;top:551.88px;font-size:10px;line-height:10px;color:#000;">0,0000</span>
<span style="left:406px;top:571.74px;font-size:10px;line-height:10px;color:#1a1a1a;">Datum zařazení</span>
<div style="left:536.7px;top:566px;width:81px;height:19.5px;box-sizing:border-box;border:1px solid #bfc1c4;background:#e4e4e4;box-shadow:inset 1px 1px 0 #ebebeb"></div>
<span style="left:539.7px;top:571.88px;font-size:10px;line-height:10px;color:#000;">00.00.0000</span>
<div style="left:605px;top:566px;width:12.7px;height:19.5px;box-sizing:border-box;border:1px solid #8a8a8a;background:#969696"></div>
<svg style="left:607px;top:568px" width="8.7" height="15.5"><path d="M1 1.5 H7.5 M1 6 H7.5 M1 9 H7.5 M1 12 H7.5" stroke="#a9a9a9" stroke-width="1"/><rect x="1.5" y="3" width="3" height="2" fill="#858585"/><rect x="3.5" y="7" width="3" height="4" fill="#8f8f8f"/></svg>
<div style="left:8px;top:617px;width:626.5px;height:121.5px;box-sizing:border-box;border:1px solid #b9cbe0;border-radius:3px"></div>
<div style="left:13px;top:611px;width:130px;height:12px;background:#f0f0f0"></div>
<span style="left:15px;top:613.51px;font-size:10.5px;line-height:10.5px;font-weight:bold;color:#1a1a1a;letter-spacing:0.58px;">Doprovodný text nářadí</span>
<div style="left:17px;top:630.8px;width:611px;height:100px;box-sizing:border-box;border:1px solid #8f9195;background:#e5e5e5"></div>
<div style="left:648px;top:347px;width:277px;height:223px;box-sizing:border-box;border:1px solid #b9cbe0;border-radius:3px"></div>
<div style="left:653px;top:341px;width:86px;height:12px;background:#f0f0f0"></div>
<span style="left:655px;top:343.51px;font-size:10.5px;line-height:10.5px;font-weight:bold;color:#1a1a1a;letter-spacing:0.58px;">Skladové údaje</span>
<span style="left:657px;top:367.04px;font-size:10px;line-height:10px;color:#1a1a1a;">Hlavní sklad</span>
<div style="left:746.3px;top:361px;width:100.7px;height:19px;box-sizing:border-box;border:1px solid #bfc1c4;background:#e4e4e4;box-shadow:inset 1px 1px 0 #ebebeb"></div>
<div style="left:834.5px;top:361px;width:12.5px;height:19px;box-sizing:border-box;border:1px solid #8a8a8a;background:#969696"></div>
<svg style="left:837px;top:364.5px" width="8" height="11"><path d="M4 1 V7" stroke="#7b7b7b" stroke-width="2.2"/><path d="M1.5 5 L4 8 L6.5 5" fill="#7b7b7b"/><path d="M1.5 9.5 H6.5" stroke="#8b8b8b" stroke-width="0.8"/></svg>
<span style="left:657px;top:417.54px;font-size:10px;line-height:10px;color:#1a1a1a;">Způsob nabytí</span>
<div style="left:746.3px;top:412px;width:131.5px;height:19px;box-sizing:border-box;border:1px solid #bfbfbf;background:#cecece"></div>
<span style="left:749.3px;top:417.64px;font-size:10px;line-height:10px;color:#5a5a5a;">vyráběná položka</span>
<svg style="left:864.8px;top:419.5px" width="9" height="6"><path d="M1 1 L4.5 5 L8 1" fill="none" stroke="#a0a0a0" stroke-width="1.1"/></svg>
<span style="left:657px;top:437.54px;font-size:10px;line-height:10px;color:#1a1a1a;">Charakterový klíč</span>
<div style="left:746.3px;top:432px;width:131.5px;height:19px;box-sizing:border-box;border:1px solid #bfbfbf;background:#cecece"></div>
<span style="left:749.3px;top:437.64px;font-size:10px;line-height:10px;color:#5a5a5a;">Charakterový klíč č. 30</span>
<svg style="left:864.8px;top:439.5px" width="9" height="6"><path d="M1 1 L4.5 5 L8 1" fill="none" stroke="#a0a0a0" stroke-width="1.1"/></svg>
<span style="left:657px;top:457.54px;font-size:10px;line-height:10px;color:#1a1a1a;">Měrná jednotka</span>
<div style="left:746.3px;top:452px;width:131.5px;height:19px;box-sizing:border-box;border:1px solid #bfbfbf;background:#cecece"></div>
<span style="left:749.3px;top:457.64px;font-size:10px;line-height:10px;color:#5a5a5a;">---</span>
<svg style="left:864.8px;top:459.5px" width="9" height="6"><path d="M1 1 L4.5 5 L8 1" fill="none" stroke="#a0a0a0" stroke-width="1.1"/></svg>
<span style="left:657px;top:477.54px;font-size:10px;line-height:10px;color:#1a1a1a;">Referent zásob</span>
<div style="left:746.3px;top:472px;width:100.7px;height:19px;box-sizing:border-box;border:1px solid #bfc1c4;background:#e4e4e4;box-shadow:inset 1px 1px 0 #ebebeb"></div>
<span style="left:444.0px;width:400px;text-align:right;top:477.64px;font-size:10px;line-height:10px;color:#000;">0</span>
<span style="left:657px;top:497.54px;font-size:10px;line-height:10px;color:#1a1a1a;">Minimální zásoba</span>
<div style="left:746.3px;top:492px;width:100.7px;height:19px;box-sizing:border-box;border:1px solid #bfc1c4;background:#e4e4e4;box-shadow:inset 1px 1px 0 #ebebeb"></div>
<span style="left:444.0px;width:400px;text-align:right;top:497.64px;font-size:10px;line-height:10px;color:#000;">0,0000</span>
<span style="left:657px;top:517.53px;font-size:10px;line-height:10px;color:#1a1a1a;">Stav na skladě</span>
<div style="left:746.3px;top:512px;width:100.7px;height:19px;box-sizing:border-box;border:1px solid #bfc1c4;background:#e4e4e4;box-shadow:inset 1px 1px 0 #ebebeb"></div>
<span style="left:444.0px;width:400px;text-align:right;top:517.63px;font-size:10px;line-height:10px;color:#000;">0,0000</span>
<span style="left:657px;top:537.53px;font-size:10px;line-height:10px;color:#1a1a1a;">Hodnota na skladě</span>
<div style="left:746.3px;top:532px;width:100.7px;height:19px;box-sizing:border-box;border:1px solid #bfc1c4;background:#e4e4e4;box-shadow:inset 1px 1px 0 #ebebeb"></div>
<span style="left:444.0px;width:400px;text-align:right;top:537.63px;font-size:10px;line-height:10px;color:#000;">0,0000</span>
<div style="left:648px;top:587px;width:277px;height:103px;box-sizing:border-box;border:1px solid #b9cbe0;border-radius:3px"></div>
<div style="left:653px;top:581px;width:94px;height:12px;background:#f0f0f0"></div>
<span style="left:655px;top:583.51px;font-size:10.5px;line-height:10.5px;font-weight:bold;color:#1a1a1a;letter-spacing:0.58px;">Systémové údaje</span>
<span style="left:657px;top:606.53px;font-size:10px;line-height:10px;color:#1a1a1a;">ID (CPolozka)</span>
<div style="left:746.3px;top:601px;width:100.7px;height:19px;box-sizing:border-box;border:1px solid #bfc1c4;background:#e4e4e4;box-shadow:inset 1px 1px 0 #ebebeb"></div>
<span style="left:444.0px;width:400px;text-align:right;top:606.63px;font-size:10px;line-height:10px;color:#000;">122</span>
<span style="left:657px;top:626.53px;font-size:10px;line-height:10px;color:#1a1a1a;">ID (CStroj)</span>
<div style="left:746.3px;top:621px;width:100.7px;height:19px;box-sizing:border-box;border:1px solid #bfc1c4;background:#e4e4e4;box-shadow:inset 1px 1px 0 #ebebeb"></div>
<span style="left:444.0px;width:400px;text-align:right;top:626.63px;font-size:10px;line-height:10px;color:#000;">65</span>
<span style="left:657px;top:646.53px;font-size:10px;line-height:10px;color:#1a1a1a;">Založení</span>
<div style="left:746.3px;top:641px;width:60.5px;height:20px;box-sizing:border-box;border:1px solid #bfc1c4;background:#e4e4e4;box-shadow:inset 1px 1px 0 #ebebeb"></div>
<span style="left:749.3px;top:647.13px;font-size:10px;line-height:10px;color:#000;">makovc</span>
<div style="left:826.4px;top:641px;width:91.1px;height:20px;box-sizing:border-box;border:1px solid #bfc1c4;background:#e4e4e4;box-shadow:inset 1px 1px 0 #ebebeb"></div>
<span style="left:829.4px;top:647.13px;font-size:10px;line-height:10px;color:#000;">24.01.2007</span>
<div style="left:905px;top:641px;width:12.5px;height:20px;box-sizing:border-box;border:1px solid #8a8a8a;background:#969696"></div>
<svg style="left:907px;top:643px" width="8.5" height="16"><path d="M1 1.5 H7.5 M1 6 H7.5 M1 9 H7.5 M1 12 H7.5" stroke="#a9a9a9" stroke-width="1"/><rect x="1.5" y="3" width="3" height="2" fill="#858585"/><rect x="3.5" y="7" width="3" height="4" fill="#8f8f8f"/></svg>
<span style="left:657px;top:666.53px;font-size:10px;line-height:10px;color:#1a1a1a;">Aktualizace</span>
<div style="left:746.3px;top:661px;width:60.5px;height:20px;box-sizing:border-box;border:1px solid #bfc1c4;background:#e4e4e4;box-shadow:inset 1px 1px 0 #ebebeb"></div>
<span style="left:749.3px;top:667.13px;font-size:10px;line-height:10px;color:#000;">dokoup</span>
<div style="left:826.4px;top:661px;width:91.1px;height:20px;box-sizing:border-box;border:1px solid #bfc1c4;background:#e4e4e4;box-shadow:inset 1px 1px 0 #ebebeb"></div>
<span style="left:829.4px;top:667.13px;font-size:10px;line-height:10px;color:#000;">10.10.2019</span>
<div style="left:905px;top:661px;width:12.5px;height:20px;box-sizing:border-box;border:1px solid #8a8a8a;background:#969696"></div>
<svg style="left:907px;top:663px" width="8.5" height="16"><path d="M1 1.5 H7.5 M1 6 H7.5 M1 9 H7.5 M1 12 H7.5" stroke="#a9a9a9" stroke-width="1"/><rect x="1.5" y="3" width="3" height="2" fill="#858585"/><rect x="3.5" y="7" width="3" height="4" fill="#8f8f8f"/></svg>
<div style="left:938px;top:347px;width:208px;height:123px;box-sizing:border-box;border:1px solid #b9cbe0;border-radius:3px"></div>
<div style="left:943px;top:341px;width:32px;height:12px;background:#f0f0f0"></div>
<span style="left:945px;top:343.51px;font-size:10.5px;line-height:10.5px;font-weight:bold;color:#1a1a1a;letter-spacing:0.58px;">Ceny</span>
<span style="left:947px;top:366.54px;font-size:10px;line-height:10px;color:#1a1a1a;">Průměrná</span>
<div style="left:1037px;top:361px;width:100.7px;height:19px;box-sizing:border-box;border:1px solid #bfc1c4;background:#e4e4e4;box-shadow:inset 1px 1px 0 #ebebeb"></div>
<span style="left:734.7px;width:400px;text-align:right;top:366.64px;font-size:10px;line-height:10px;color:#000;">0,0000</span>
<span style="left:947px;top:386.54px;font-size:10px;line-height:10px;color:#1a1a1a;">Nákupní</span>
<div style="left:1037px;top:381px;width:100.7px;height:19px;box-sizing:border-box;border:1px solid #bfc1c4;background:#e4e4e4;box-shadow:inset 1px 1px 0 #ebebeb"></div>
<span style="left:734.7px;width:400px;text-align:right;top:386.64px;font-size:10px;line-height:10px;color:#000;">0,0000</span>
<span style="left:947px;top:406.54px;font-size:10px;line-height:10px;color:#1a1a1a;">Prodejní</span>
<div style="left:1037px;top:401px;width:100.7px;height:19px;box-sizing:border-box;border:1px solid #bfc1c4;background:#e4e4e4;box-shadow:inset 1px 1px 0 #ebebeb"></div>
<span style="left:734.7px;width:400px;text-align:right;top:406.64px;font-size:10px;line-height:10px;color:#000;">0,0000</span>
<span style="left:947px;top:426.54px;font-size:10px;line-height:10px;color:#1a1a1a;">Vnitropodniková</span>
<div style="left:1037px;top:421px;width:100.7px;height:19px;box-sizing:border-box;border:1px solid #bfc1c4;background:#e4e4e4;box-shadow:inset 1px 1px 0 #ebebeb"></div>
<span style="left:734.7px;width:400px;text-align:right;top:426.64px;font-size:10px;line-height:10px;color:#000;">0,0000</span>
<span style="left:947px;top:446.54px;font-size:10px;line-height:10px;color:#1a1a1a;">Obchodní</span>
<div style="left:1037px;top:441px;width:100.7px;height:19px;box-sizing:border-box;border:1px solid #bfc1c4;background:#e4e4e4;box-shadow:inset 1px 1px 0 #ebebeb"></div>
<span style="left:734.7px;width:400px;text-align:right;top:446.64px;font-size:10px;line-height:10px;color:#000;">0,0000</span>
<div style="left:0px;top:1037px;width:1697px;height:17px;background:#f0f0f0"></div>
<div style="left:0px;top:1053px;width:1697px;height:1px;background:#a8a8a8"></div>
<div style="left:1696px;top:1037px;width:1px;height:17px;background:#a8a8a8"></div>
<div style="left:96px;top:1037px;width:1px;height:16px;background:#9a9a9a"></div>
<div style="left:288px;top:1037px;width:1px;height:16px;background:#9a9a9a"></div>
<div style="left:320px;top:1037px;width:1px;height:16px;background:#9a9a9a"></div>
<div style="left:384px;top:1037px;width:1px;height:16px;background:#9a9a9a"></div>
<span style="left:5px;top:1041.54px;font-size:10px;line-height:10px;color:#111;">CNaradiWrapper</span>
<span style="left:101px;top:1041.54px;font-size:10px;line-height:10px;color:#111;">CNaradi(V)</span>
<span style="left:325px;top:1041.54px;font-size:10px;line-height:10px;color:#111;">17.09.2020</span>
<svg style="left:1686px;top:1040px" width="10" height="10"><path d="M1.5 9.5 L9.5 1.5 M5 9.5 L9.5 5 M8.5 9.5 L9.5 8.5" stroke="#8a8a8a" stroke-width="1.1"/></svg>
<div style="left:896px;top:1055px;width:89px;height:1px;background:#a8cdf0"></div>
</body></html>
